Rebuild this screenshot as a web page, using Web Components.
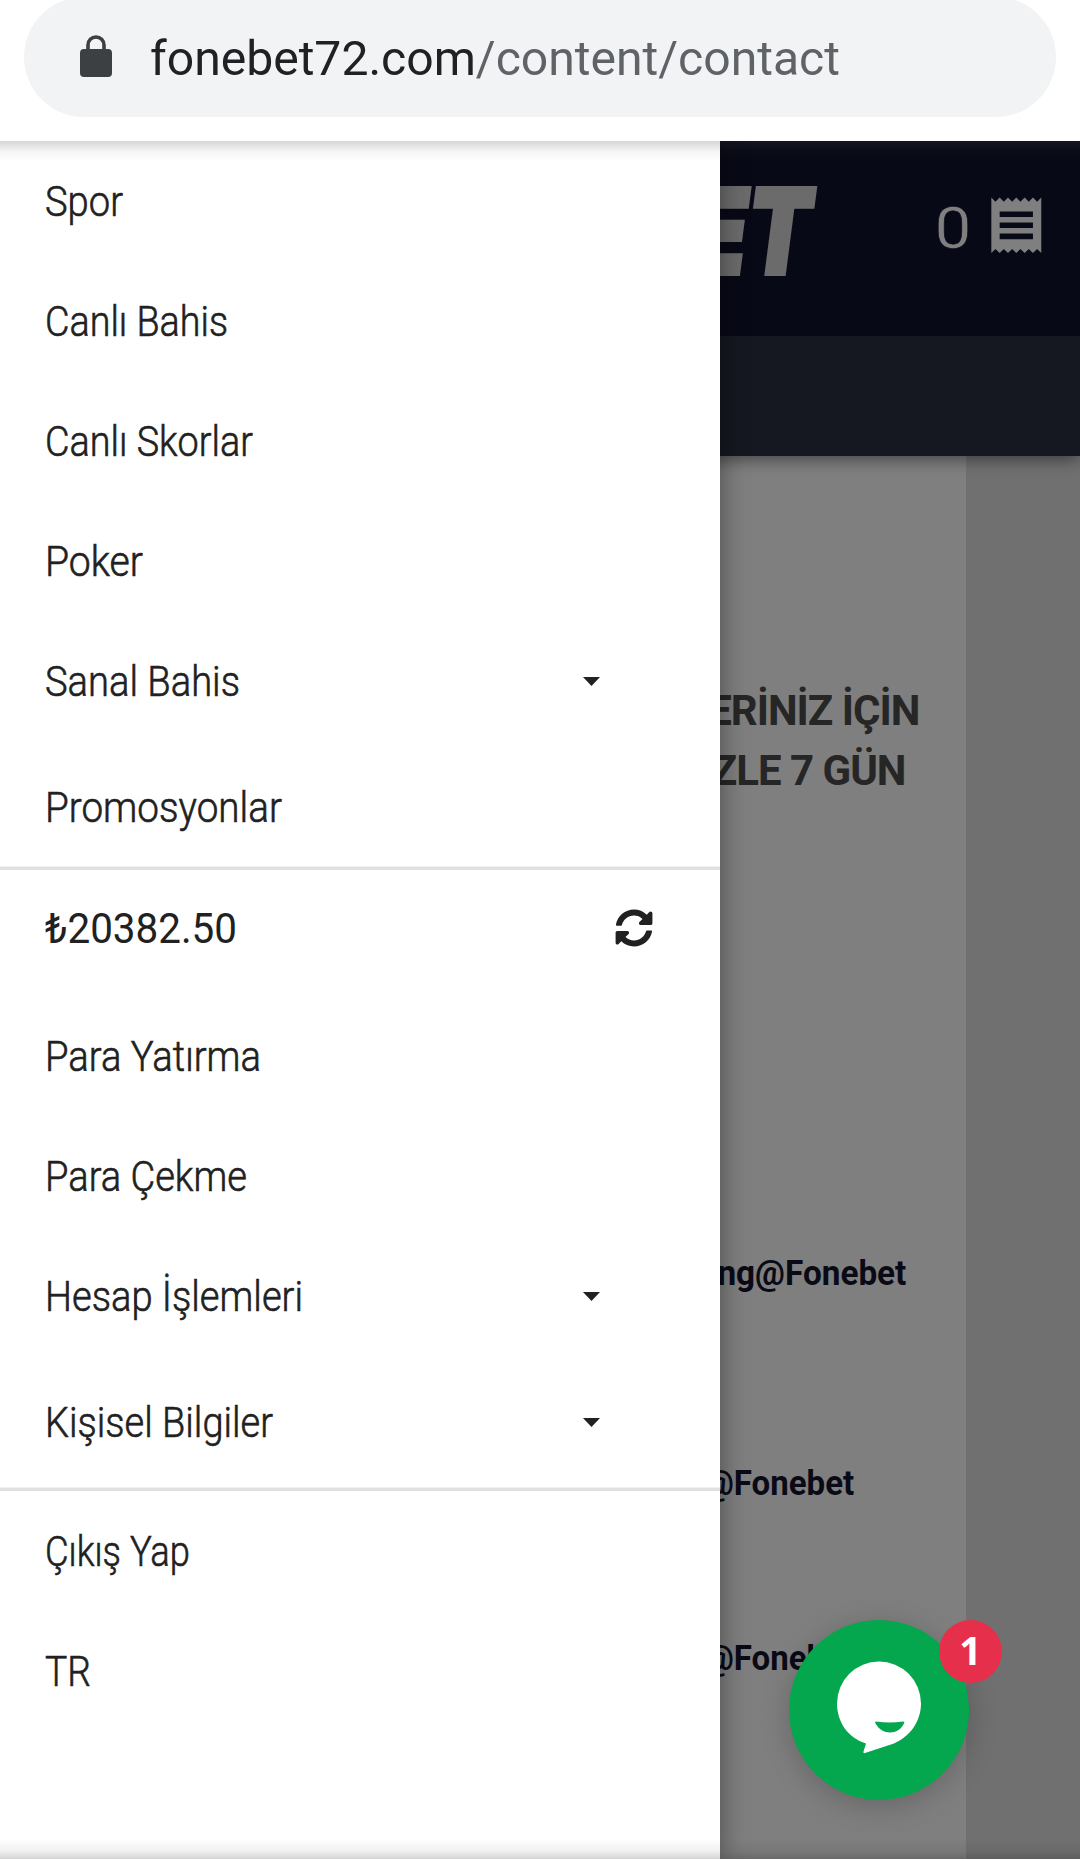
<!DOCTYPE html>
<html lang="tr">
<head>
<meta charset="utf-8">
<title>Fonebet</title>
<style>
  html, body {
    margin: 0;
    height: 100%;
    overflow: hidden;
    background: #fff;
    font-family: Roboto, "Noto Sans", sans-serif;
    color: #202020;
  }
</style>
</head>
<body>
<phone-screen>
  <address-bar slot="top" host="fonebet72.com" path="/content/contact"></address-bar>
  <site-page></site-page>
  <side-drawer slot="drawer">
    <menu-item width="78">Spor</menu-item>
    <menu-item width="183">Canlı Bahis</menu-item>
    <menu-item width="208">Canlı Skorlar</menu-item>
    <menu-item width="98">Poker</menu-item>
    <menu-item width="195" expandable>Sanal Bahis</menu-item>
    <menu-item width="237">Promosyonlar</menu-item>
    <menu-divider></menu-divider>
    <menu-item width="192" balance>₺20382.50</menu-item>
    <menu-item width="216">Para Yatırma</menu-item>
    <menu-item width="202">Para Çekme</menu-item>
    <menu-item width="258" expandable>Hesap İşlemleri</menu-item>
    <menu-item width="228" expandable>Kişisel Bilgiler</menu-item>
    <menu-divider></menu-divider>
    <menu-item width="145">Çıkış Yap</menu-item>
    <menu-item width="46">TR</menu-item>
  </side-drawer>
  <chat-button slot="chat" count="1"></chat-button>
</phone-screen>

<script>
const define = (name, html, setup) => {
  const template = document.createElement('template');
  template.innerHTML = html;

  customElements.define(name, class extends HTMLElement {
    constructor() {
      super();
      this.attachShadow({ mode: 'open' }).appendChild(template.content.cloneNode(true));
    }

    connectedCallback() {
      if (setup) setup(this, this.shadowRoot);
    }
  });
};

// Condenses a line of text to the given width, in pixels.
define('fit-text', `
  <style>
    :host { display: inline-block; white-space: nowrap; }
    span { display: inline-block; transform-origin: var(--origin, left) center; }
  </style>
  <span><slot></slot></span>
`, (el, root) => {
  const span = root.querySelector('span');
  const width = Number(el.getAttribute('width'));
  if (width && span.offsetWidth) {
    span.style.transform = '';
    span.style.transform = `scaleX(${width / span.getBoundingClientRect().width})`;
  }
});

define('address-bar', `
  <style>
    :host { display: block; height: 141px; overflow: hidden; background: #fff; }
    .pill {
      display: flex;
      align-items: center;
      box-sizing: border-box;
      height: 120px;
      margin: -3px 24px 0;
      padding-left: 56px;
      border-radius: 60px;
      background: #f1f3f4;
    }
    svg { width: 32px; height: 42px; flex: none; margin: -2px 38px 0 0; }
    .url { font-size: 48px; line-height: 60px; padding-top: 3px; white-space: nowrap; }
    .host { color: #202124; }
    .path { color: #5f6368; }
  </style>
  <div class="pill">
    <svg viewBox="0 0 32 42">
      <path d="M8 16V10a8 8 0 0 1 16 0v6" fill="none" stroke="#3c4043" stroke-width="3.6"/>
      <rect y="14" width="32" height="28" rx="4" fill="#3c4043"/>
    </svg>
    <fit-text class="url" width="690"><span class="host"></span><span class="path"></span></fit-text>
  </div>
`, (el, root) => {
  root.querySelector('.host').textContent = el.getAttribute('host');
  root.querySelector('.path').textContent = el.getAttribute('path');
  root.querySelector('fit-text').connectedCallback();
});

define('site-header', `
  <style>
    :host { display: block; position: relative; box-shadow: 0 3px 16px rgba(0, 0, 0, 0.5); }
    .bar {
      display: flex;
      align-items: center;
      justify-content: flex-end;
      box-sizing: border-box;
      height: 195px;
      padding: 0 30px 27px 0;
      background: #10132d;
      color: #fff;
    }
    .logo {
      --origin: right;
      font: italic 900 118px/120px Inter, Roboto, sans-serif;
      -webkit-text-stroke: 4px #d6d6d6;
      color: #d6d6d6;
      margin: 11px 128px 0 0;
    }
    .count {
      --origin: right;
      font-size: 58px;
      line-height: 66px;
      -webkit-text-stroke: 0.6px #10132d;
      padding-top: 6px;
      margin-right: 12px;
    }
    svg { width: 66.6px; height: 66.6px; fill: #fff; }
    .sub { height: 120px; background: #2b3140; }
  </style>
  <div class="bar">
    <fit-text class="logo" width="436">FONEBET</fit-text>
    <fit-text class="count" width="37">0</fit-text>
    <svg viewBox="0 0 24 24"><path d="M18 17H6v-2h12v2zm0-4H6v-2h12v2zm0-4H6V7h12v2zM3 22l1.5-1.5L6 22l1.5-1.5L9 22l1.5-1.5L12 22l1.5-1.5L15 22l1.5-1.5L18 22l1.5-1.5L21 22V2l-1.5 1.5L18 2l-1.5 1.5L15 2l-1.5 1.5L12 2l-1.5 1.5L9 2 7.5 3.5 6 2 4.5 3.5 3 2v20z"/></svg>
  </div>
  <div class="sub"></div>
`);

define('site-page', `
  <style>
    :host { display: flex; flex-direction: column; height: 100%; background: #e1e1e1; }
    main {
      flex: 1;
      box-sizing: border-box;
      width: 966px;
      padding-top: 225px;
      background: #fff;
      text-align: right;
    }
    h2 {
      margin: 0 46.5px 0 0;
      font-size: 42px;
      line-height: 60px;
      font-weight: 700;
      letter-spacing: -1px;
      color: #4c4c4c;
    }
    h2 div:last-child { padding-right: 14px; }
    .contact {
      --origin: right;
      display: block;
      font-size: 35.5px;
      line-height: 60px;
      font-weight: 700;
      color: #14152f;
      padding-right: 112px;
    }
    .contact:first-of-type { padding-right: 60px; margin-top: 442px; }
    .contact:nth-of-type(2) { margin-top: 150px; }
    .contact:nth-of-type(3) { margin-top: 115px; }
  </style>
  <site-header></site-header>
  <main>
    <h2><div>ERİNİZ İÇİN</div><div>ZLE 7 GÜN</div></h2>
    <fit-text class="contact" width="189">ng@Fonebet</fit-text>
    <fit-text class="contact" width="150">@Fonebet</fit-text>
    <fit-text class="contact" width="150">@Fonebet</fit-text>
  </main>
`);

define('menu-item', `
  <style>
    :host {
      display: flex;
      box-sizing: border-box;
      height: 120px;
      padding-left: 45px;
      font-size: 42px;
      font-weight: 300;
      line-height: 124px;
      color: #212121;
      -webkit-text-stroke: 0.6px #212121;
    }
    :host([expandable]), :host([balance]) { height: 126px; }
    :host([balance]) { line-height: 119px; font-weight: 400; -webkit-text-stroke: 0; }
    fit-text { flex: 1; }
    svg { display: none; flex: none; fill: #212121; }
    .caret { width: 17px; height: 9px; margin: 57px 120.5px 0 0; }
    .sync { width: 38px; height: 38px; margin: 40px 67.5px 0 0; }
    :host([expandable]) .caret, :host([balance]) .sync { display: block; }
  </style>
  <fit-text><slot></slot></fit-text>
  <svg class="caret" viewBox="0 0 17 9"><path d="M0 0h17L8.500 9z"/></svg>
  <svg class="sync" viewBox="0 0 512 512"><path d="M370.72 133.28C339.458 104.008 298.888 87.962 255.848 88c-77.458.068-144.328 53.178-162.791 126.85-1.344 5.363-6.122 9.15-11.651 9.15H24.103c-7.498 0-13.194-6.807-11.807-14.176C33.933 94.924 134.813 8 256 8c66.448 0 126.791 26.136 171.315 68.685L463.03 40.97C478.149 25.851 504 36.559 504 57.941V192c0 13.255-10.745 24-24 24H345.941c-21.382 0-32.09-25.851-16.971-40.971l41.75-41.749zM32 296h134.059c21.382 0 32.09 25.851 16.971 40.971l-41.75 41.75c31.262 29.273 71.835 45.319 114.876 45.28 77.418-.07 144.315-53.144 162.787-126.849 1.344-5.363 6.122-9.15 11.651-9.15h57.304c7.498 0 13.194 6.807 11.807 14.176C478.067 417.076 377.187 504 256 504c-66.448 0-126.791-26.136-171.315-68.685L48.97 471.03C33.851 486.149 8 475.441 8 454.059V320c0-13.255 10.745-24 24-24z"/></svg>
`, (el, root) => {
  const fit = root.querySelector('fit-text');
  fit.setAttribute('width', el.getAttribute('width'));
  fit.connectedCallback();
});

define('menu-divider', `
  <style>
    :host {
      display: block;
      box-sizing: border-box;
      height: 4px;
      margin-bottom: -1px;
      background: #e0e0e0;
      border-top: 1px solid #f0f0f0;
    }
  </style>
`);

define('side-drawer', `
  <style>
    :host {
      display: block;
      width: 720px;
      height: 100%;
      background: #fff;
      box-shadow: 0 0 26px rgba(0, 0, 0, 0.42);
    }
  </style>
  <slot></slot>
`);

define('chat-button', `
  <style>
    :host { display: block; position: relative; width: 180px; height: 180px; }
    .face {
      display: block;
      border-radius: 50%;
      background: #05a74e;
      box-shadow: 0 6px 30px rgba(0, 0, 0, 0.2);
    }
    .badge {
      position: absolute;
      top: 0;
      right: -33px;
      width: 63px;
      height: 63px;
      border-radius: 50%;
      background: #e6304b;
      color: #fff;
      font: 700 39px/60px "Noto Sans", sans-serif;
      text-align: center;
    }
  </style>
  <svg class="face" width="180" height="180" viewBox="0 0 180 180">
    <path fill="#fff" d="M90 41.500a42 42 0 0 1 42 42c0 18-11 33-27 40L76 133q-2 .6-1.500-1.400L77 123.500C59 118 48 102 48 83.500a42 42 0 0 1 42-42z"/>
    <path fill="#05a74e" d="M87 101.500q14 2 27 0q2 0 1 2c-3 6-8 9-14 9s-11-3-14.500-9q-1-2 .5-2z"/>
  </svg>
  <span class="badge"></span>
`, (el, root) => {
  root.querySelector('.badge').textContent = el.getAttribute('count');
});

define('phone-screen', `
  <style>
    :host { display: flex; flex-direction: column; height: 1861px; background: #fff; }
    .view { position: relative; height: 1718px; overflow: hidden; }
    .backdrop { position: absolute; inset: 0; background: rgba(0, 0, 0, 0.5); }
    .drawer { position: absolute; inset: 0 auto 0 0; margin-top: -1px; }
    .chat { position: absolute; left: 789px; bottom: 59px; }
    /* toolbar shadows over the top and the bottom of the page */
    .shade {
      position: absolute;
      inset: 0;
      background:
        linear-gradient(rgba(60, 66, 60, 0.22), rgba(60, 66, 60, 0.06) 10px, transparent 20px),
        linear-gradient(0deg, rgba(0, 0, 0, 0.17), rgba(0, 0, 0, 0.06) 8px, transparent 20px);
    }
  </style>
  <slot name="top"></slot>
  <div class="view">
    <slot></slot>
    <div class="backdrop"></div>
    <div class="drawer"><slot name="drawer"></slot></div>
    <div class="chat"><slot name="chat"></slot></div>
    <div class="shade"></div>
  </div>
`);
</script>
</body>
</html>
